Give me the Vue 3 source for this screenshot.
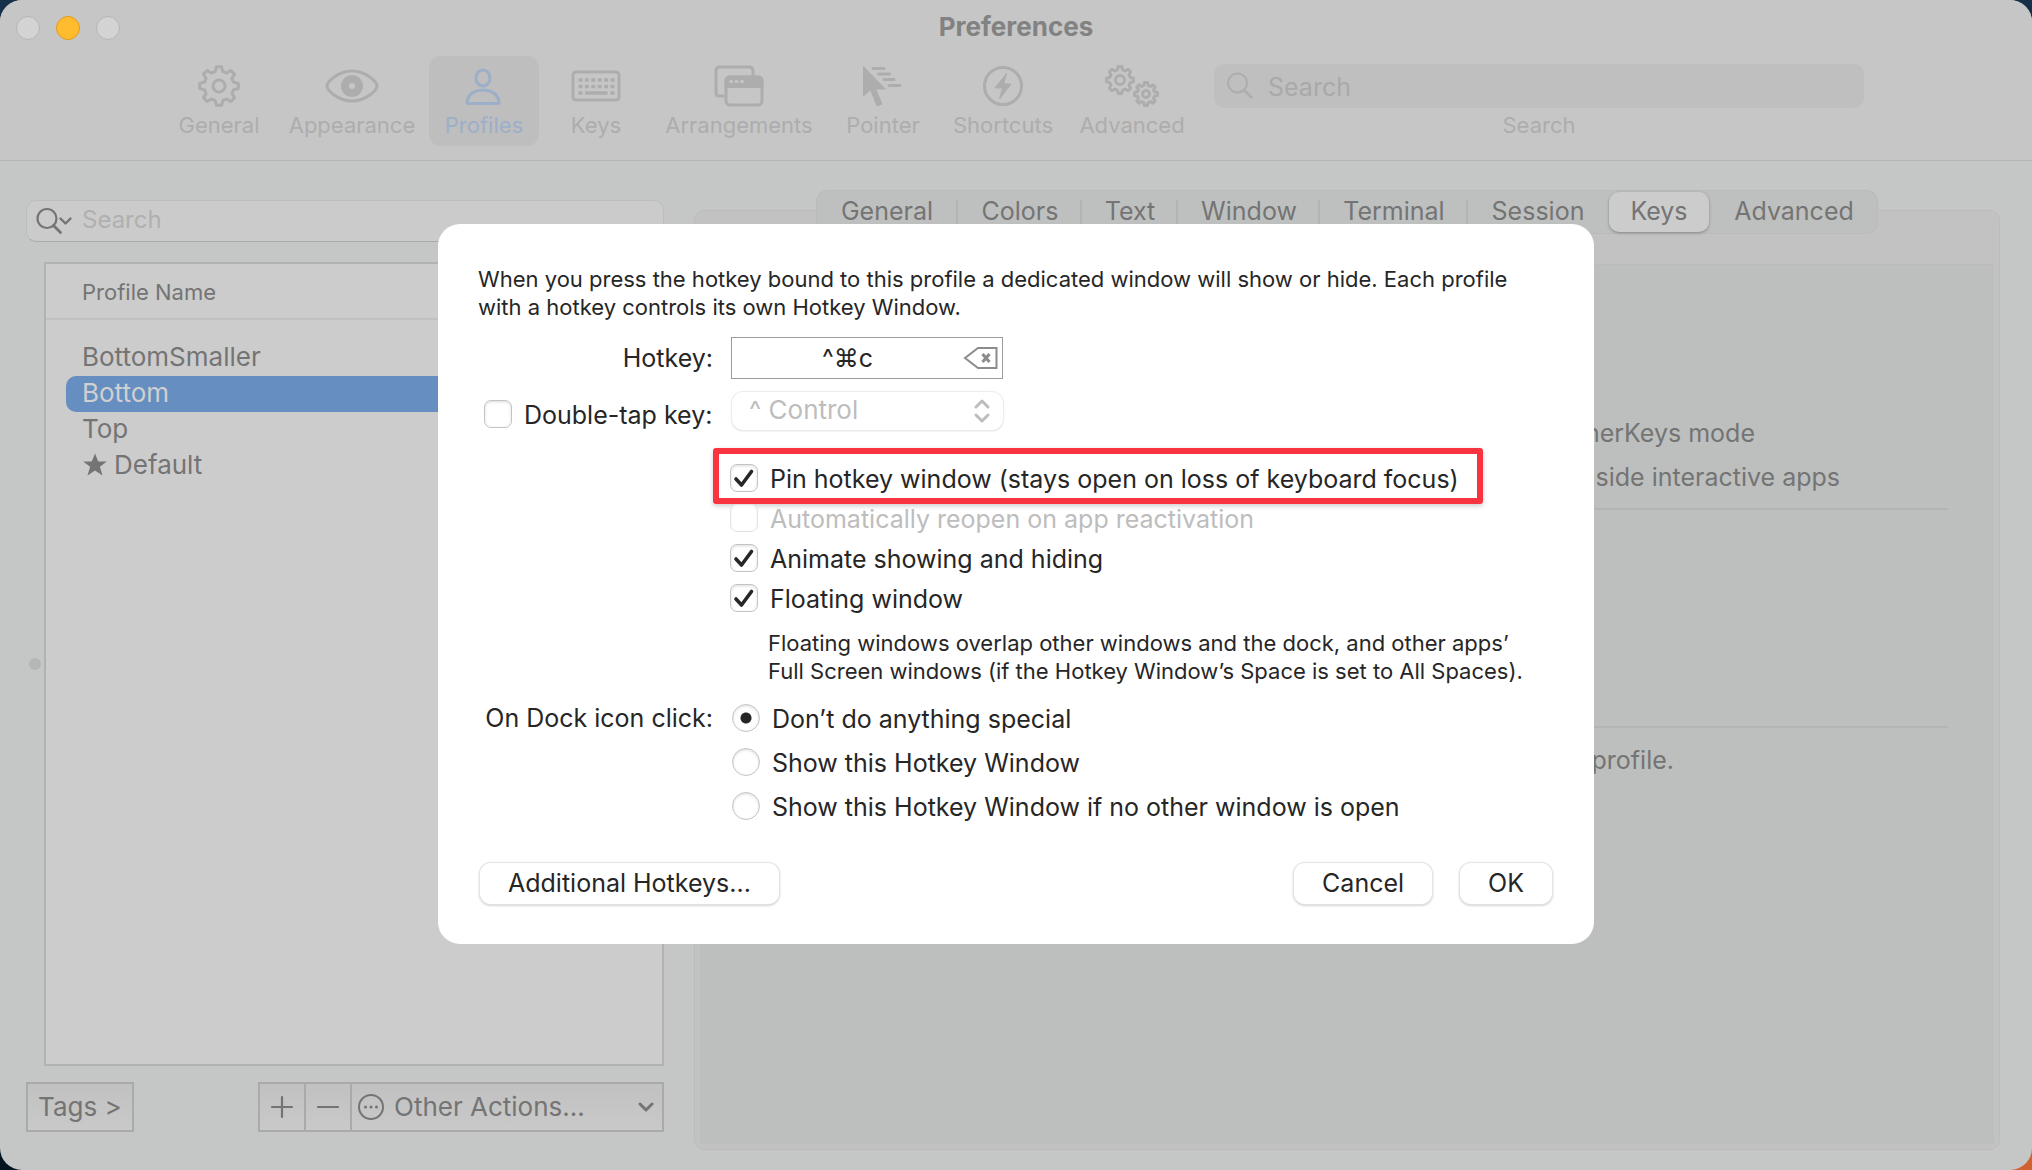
<script setup>
import { ref } from 'vue'

function gearPath(cx, cy, outer, inner, teeth) {
  const step = (Math.PI * 2) / teeth
  const points = []
  for (let i = 0; i < teeth; i++) {
    const a = i * step - Math.PI / 2
    const ring = [
      [inner, a - step * 0.32],
      [outer, a - step * 0.17],
      [outer, a + step * 0.17],
      [inner, a + step * 0.32],
    ]
    for (const [r, t] of ring) {
      points.push(`${(cx + r * Math.cos(t)).toFixed(2)} ${(cy + r * Math.sin(t)).toFixed(2)}`)
    }
  }
  return `M${points.join('L')}Z`
}

const bigGear = gearPath(24, 24, 19.5, 15, 8)
const leftGear = gearPath(16, 18, 13.5, 10.5, 8)
const rightGear = gearPath(42, 32, 11.5, 8.8, 8)

const toolbar = ['General', 'Appearance', 'Profiles', 'Keys', 'Arrangements', 'Pointer', 'Shortcuts', 'Advanced']
const tabs = ['General', 'Colors', 'Text', 'Window', 'Terminal', 'Session', 'Keys', 'Advanced']
const profiles = [
  { name: 'BottomSmaller' },
  { name: 'Bottom', selected: true },
  { name: 'Top' },
  { name: 'Default', starred: true },
]
const options = ref([
  { id: 'pin', label: 'Pin hotkey window (stays open on loss of keyboard focus)', on: true, marked: true },
  { id: 'reopen', label: 'Automatically reopen on app reactivation', on: false, disabled: true },
  { id: 'animate', label: 'Animate showing and hiding', on: true },
  { id: 'floating', label: 'Floating window', on: true },
])
const doubleTap = ref(false)
const dockClick = ref('none')
const dockChoices = [
  { id: 'none', label: 'Don’t do anything special' },
  { id: 'show', label: 'Show this Hotkey Window' },
  { id: 'showIf', label: 'Show this Hotkey Window if no other window is open' },
]
</script>

<template>
  <div class="desktop">
    <div class="window">
      <header class="titlebar">
        <div class="lights">
          <button class="light" aria-label="Close"></button>
          <button class="light amber" aria-label="Minimize"></button>
          <button class="light" aria-label="Zoom"></button>
        </div>
        <h1 class="title">Preferences</h1>
        <div class="toolbar">
          <nav class="tools">
            <button v-for="t in toolbar" :key="t" class="tool" :class="{ active: t === 'Profiles' }">
              <svg v-if="t === 'General'" width="48" height="48" viewBox="0 0 48 48" class="line">
                <path :d="bigGear" />
                <circle cx="24" cy="24" r="6" />
              </svg>
              <svg v-else-if="t === 'Appearance'" width="56" height="48" viewBox="0 0 56 48" class="line">
                <path d="M3 24C3 20 14 9 28 9S53 20 53 24 42 39 28 39 3 28 3 24Z" />
                <circle cx="28" cy="24" r="7" stroke-width="8" />
              </svg>
              <svg v-else-if="t === 'Profiles'" width="48" height="48" viewBox="0 0 48 48" class="line">
                <ellipse cx="23" cy="16" rx="7" ry="8" />
                <path d="M8 41.500C6.600 41.500 7.200 39 7.500 37.500 9 31.500 15.500 28 23 28s14 3.500 15.500 9.500c.3 1.500.9 4-.5 4Z" />
              </svg>
              <svg v-else-if="t === 'Keys'" width="52" height="48" viewBox="0 0 52 48" class="line">
                <rect x="3" y="10" width="46" height="28" rx="3" />
                <path d="M8.500 18h36M8.500 24.500h36" stroke-dasharray="4 2.400" stroke-width="3.500" stroke-linecap="butt" />
                <path d="M8.500 31h4M15 31h22.500M40.500 31h4" stroke-width="3.500" stroke-linecap="butt" />
              </svg>
              <svg v-else-if="t === 'Arrangements'" width="52" height="48" viewBox="0 0 52 48" class="line">
                <path d="M10 34H6q-3 0-3-3V9q0-4 4-4h29q4 0 4 4v5" />
                <rect x="13" y="15" width="36" height="28" rx="4" />
                <path d="M13 24.500V19q0-4 4-4h28q4 0 4 4v5.500Z" class="solid" />
                <path d="M17.500 19.500h1M23 19.500h1M28.500 19.500h1" stroke="#c6c6c6" stroke-width="3" />
              </svg>
              <svg v-else-if="t === 'Pointer'" width="48" height="48" viewBox="0 0 48 48" class="line">
                <path d="M4.500 5v29l7-6.500 6.500 16.500 5-2-6.500-15H26Z" class="solid" stroke-width="1" />
                <path d="M14 6.500h11M19.500 12h11M25 17.500h10M30 23.500h11" />
              </svg>
              <svg v-else-if="t === 'Shortcuts'" width="48" height="48" viewBox="0 0 48 48" class="line">
                <circle cx="24" cy="24" r="18.500" />
                <path d="M27.500 11.500 16 26h7.500L20.500 37 32 22h-7Z" class="solid" stroke-width="1" />
              </svg>
              <svg v-else width="56" height="48" viewBox="0 0 56 48" class="line">
                <path :d="leftGear" />
                <circle cx="16" cy="18" r="4.500" />
                <path :d="rightGear" />
                <circle cx="42" cy="32" r="3.500" />
              </svg>
              <span>{{ t }}</span>
            </button>
          </nav>
          <label class="tool-search">
            <span class="tool-field">
              <svg width="28" height="28" viewBox="0 0 28 28" class="line">
                <circle cx="11.500" cy="11" r="9.500" stroke-width="2" />
                <path d="m18 18 7.500 7.500" stroke-width="2.500" />
              </svg>
              <input type="search" placeholder="Search" />
            </span>
            <span class="tool-caption">Search</span>
          </label>
        </div>
      </header>

      <main class="content">
        <section class="sidebar">
          <label class="filter">
            <svg width="36" height="28" viewBox="0 0 36 28" class="line">
              <circle cx="11" cy="11.500" r="9.500" stroke-width="2.200" />
              <path d="m17.500 18.500 7 7" stroke-width="2.800" />
              <path d="m24.500 11.500 5 5 5-5" stroke-width="2.400" />
            </svg>
            <input type="search" placeholder="Search" aria-label="Filter profiles" />
          </label>
          <div class="list">
            <span class="handle"></span>
            <table>
              <thead>
                <tr><th scope="col">Profile Name</th></tr>
              </thead>
              <tbody>
                <tr v-for="p in profiles" :key="p.name">
                  <td>
                    <div class="profile" :class="{ selected: p.selected }">
                      <svg v-if="p.starred" width="26" height="24" viewBox="0 0 26 24">
                        <path fill="currentColor" d="M13 .5l3.200 8h8.600l-6.900 5.300 2.600 8.700L13 17.400 5.500 22.500l2.600-8.700L1.200 8.500h8.600Z" />
                      </svg>
                      <span>{{ p.name }}</span>
                    </div>
                  </td>
                </tr>
              </tbody>
            </table>
          </div>
          <div class="actions">
            <button class="square">Tags &gt;</button>
            <div class="group">
              <button class="square narrow" aria-label="Add profile">
                <svg width="24" height="24" viewBox="0 0 24 24" class="line"><path d="M12 2v20M2 12h20" stroke-width="2.200" /></svg>
              </button>
              <button class="square narrow" aria-label="Remove profile">
                <svg width="24" height="24" viewBox="0 0 24 24" class="line"><path d="M2 12h20" stroke-width="2.200" /></svg>
              </button>
              <button class="square wide">
                <svg width="28" height="28" viewBox="0 0 28 28" class="line">
                  <circle cx="14" cy="14" r="12" stroke-width="2" />
                  <path d="M8.500 14h.01M14 14h.01M19.500 14h.01" stroke-width="3" />
                </svg>
                <span>Other Actions...</span>
                <svg width="16" height="16" viewBox="0 0 16 16" class="line chevron"><path d="m2 5 6 6 6-6" /></svg>
              </button>
            </div>
          </div>
        </section>

        <section class="detail">
          <div class="tabs" role="tablist">
            <button
              v-for="t in tabs"
              :key="t"
              role="tab"
              class="tab"
              :class="{ current: t === 'Keys' }"
              :aria-selected="t === 'Keys'"
            >{{ t }}</button>
          </div>
          <div class="panel">
            <div class="pane">
              <p class="note mode">modifyOtherKeys mode</p>
              <p class="note apps">inside interactive apps</p>
              <hr />
              <hr class="far" />
              <p class="note owner">profile.</p>
            </div>
          </div>
        </section>
      </main>

      <form class="sheet" role="dialog" aria-label="Hotkey window" @submit.prevent>
        <p class="small">
          When you press the hotkey bound to this profile a dedicated window will show or hide. Each profile<br />
          with a hotkey controls its own Hotkey Window.
        </p>
        <div class="row hotkey-row">
          <label class="lead" for="hotkey">Hotkey:</label>
          <div class="hotkey">
            <input id="hotkey" type="text" value="^⌘c" readonly />
            <button type="button" aria-label="Clear hotkey">
              <svg width="36" height="24" viewBox="0 0 36 24" class="line">
                <path d="M2 12 15 2h18.500v20H15Z" stroke-width="2" stroke-linejoin="miter" />
                <path d="m19.500 8 7 8m0-8-7 8" stroke-width="3" stroke-linecap="butt" />
              </svg>
            </button>
          </div>
        </div>
        <div class="row double-row">
          <label class="option double">
            <span class="box">
              <input v-model="doubleTap" type="checkbox" />
            </span>
            <span>Double-tap key:</span>
          </label>
          <div class="picker">
            <select disabled aria-label="Double-tap modifier">
              <option>^ Control</option>
            </select>
            <svg width="16" height="24" viewBox="0 0 16 24" class="line">
              <path d="m2 8 6-6 6 6M2 16l6 6 6-6" />
            </svg>
          </div>
        </div>
        <div class="checks">
          <label v-for="o in options" :key="o.id" class="option" :class="{ off: o.disabled }">
            <span class="box">
              <input v-model="o.on" type="checkbox" :disabled="o.disabled" />
              <svg v-if="o.on" width="28" height="28" viewBox="0 0 28 28" class="line">
                <path d="m6 15 5.500 6L21.500 7.500" stroke-width="3.600" />
              </svg>
            </span>
            <span>{{ o.label }}</span>
            <span v-if="o.marked" class="marker"></span>
          </label>
        </div>
        <p class="small hint">
          Floating windows overlap other windows and the dock, and other apps’<br />
          Full Screen windows (if the Hotkey Window’s Space is set to All Spaces).
        </p>
        <div class="row dock" role="radiogroup" aria-labelledby="dock-label">
          <span id="dock-label" class="lead">On Dock icon click:</span>
          <div>
            <label v-for="c in dockChoices" :key="c.id" class="option radio">
              <input v-model="dockClick" type="radio" name="dock" :value="c.id" />
              <span>{{ c.label }}</span>
            </label>
          </div>
        </div>
        <footer class="buttons">
          <button type="button" class="push">Additional Hotkeys...</button>
          <button type="button" class="push end">Cancel</button>
          <button type="submit" class="push">OK</button>
        </footer>
      </form>
    </div>
  </div>
</template>

<style>
body {
  background: #1c2f45;
}
</style>

<style scoped>
* {
  box-sizing: border-box;
}
.desktop {
  min-height: 100vh;
  display: flex;
  background: linear-gradient(to bottom, transparent 50%, #001520 50%) left / 50% 100% no-repeat,
    linear-gradient(to bottom, #17304a 50%, #cf6230 50%);
  font-family: Inter, 'Liberation Sans', sans-serif;
  font-size: 25px;
  line-height: 32px;
  color: #747474;
}
button,
input,
select {
  font: inherit;
  color: inherit;
  margin: 0;
  padding: 0;
  border: 0;
  background: none;
}
input {
  min-width: 0;
  outline: 0;
}
p,
h1 {
  margin: 0;
}
.line {
  flex: none;
  fill: none;
  stroke: currentColor;
  stroke-width: 3;
  stroke-linecap: round;
  stroke-linejoin: round;
}
.solid {
  fill: currentColor;
}
.window {
  position: relative;
  flex: 1;
  display: flex;
  flex-direction: column;
  border-radius: 22px;
  overflow: hidden;
  background: #c5c7c6;
}
.titlebar {
  position: relative;
  height: 161px;
  background: #c6c6c6;
  border-bottom: 1px solid #b4b6b5;
}
.lights {
  position: absolute;
  left: 16px;
  top: 16px;
  display: flex;
  gap: 16px;
}
.light {
  width: 24px;
  height: 24px;
  border-radius: 50%;
  background: #d3d3d3;
  border: 1px solid #b4b4b4;
}
.amber {
  background: #febc2e;
  border-color: #e09c1a;
}
.title {
  padding-top: 11px;
  text-align: center;
  font-size: 26px;
  line-height: 32px;
  font-weight: 700;
  color: #828282;
}
.toolbar {
  display: flex;
  gap: 15px;
  margin-top: 13px;
  padding: 0 168px 0 163px;
  font-size: 22px;
  line-height: 28px;
  color: #adadad;
}
.tools {
  display: grid;
  grid-template-columns: 112px 154px 110px 114px 172px 116px 124px 134px;
}
.tool {
  display: flex;
  flex-direction: column;
  align-items: center;
  height: 90px;
  padding-top: 6px;
  border-radius: 12px;
}
.tool span {
  line-height: 30px;
}
.active {
  background: #bebebe;
  color: #9cafc8;
}
.tool-search {
  flex: 1;
  padding-top: 8px;
}
.tool-field {
  display: flex;
  align-items: center;
  gap: 14px;
  height: 44px;
  padding-left: 12px;
  border-radius: 10px;
  background: #bfbfbf;
  font-size: 25px;
}
.tool-field input,
.filter input {
  flex: 1;
  height: 32px;
}
.tool-field input {
  padding-top: 2px;
}
.tool-search input::placeholder {
  color: #a9a9a9;
}
.tool-caption {
  display: block;
  margin-top: 2px;
  line-height: 30px;
  text-align: center;
}
.content {
  flex: 1;
  display: grid;
  grid-template-columns: minmax(0, 638px) minmax(0, 1fr);
  gap: 30px;
  padding: 0 32px 0 26px;
}
.sidebar {
  display: flex;
  flex-direction: column;
  padding: 39px 0 38px;
}
.filter {
  display: flex;
  align-items: center;
  gap: 10px;
  height: 42px;
  padding-left: 9px;
  border-radius: 10px;
  background: #cbcbcb;
  border: 1px solid #bcbebd;
  border-bottom-color: #aaacab;
  font-size: 24px;
}
.filter input {
  padding-bottom: 2px;
}
.filter input::placeholder {
  color: #b0b0b0;
}
.list {
  position: relative;
  flex: 1;
  margin: 20px 0 16px 18px;
  border: 2px solid #b1b2b1;
  background: #cccccc;
}
.handle {
  position: absolute;
  left: -17px;
  top: 50%;
  width: 12px;
  height: 12px;
  margin-top: -6px;
  border-radius: 50%;
  background: #b5b7b6;
}
table {
  width: 100%;
  border-spacing: 0;
}
th {
  height: 56px;
  padding: 2px 36px 0;
  border-bottom: 2px solid #c1c1c1;
  font-size: 22px;
  font-weight: 400;
  text-align: left;
}
td {
  padding: 0 20px;
}
tbody::before {
  content: '';
  display: block;
  height: 20px;
}
.profile {
  display: flex;
  align-items: center;
  gap: 6px;
  height: 36px;
  padding: 0 16px 2px;
  border-radius: 10px;
  font-size: 26px;
}
.selected {
  background: #668ec1;
  color: #d0d0d0;
}
.actions {
  display: flex;
  justify-content: space-between;
  font-size: 26px;
}
.square {
  height: 50px;
  padding: 0 10px;
  border: 2px solid #a9aaa9;
  background: linear-gradient(#c1c1c1, #c9c9c9);
}
.group {
  display: flex;
}
.group .square + .square {
  border-left: 0;
}
.narrow {
  display: flex;
  align-items: center;
}
.wide {
  display: flex;
  align-items: center;
  gap: 9px;
  width: 312px;
  padding: 0 8px 0 5px;
}
.chevron {
  margin-left: auto;
}
.detail {
  display: flex;
  flex-direction: column;
  padding: 29px 0 20px;
}
.tabs {
  z-index: 1;
  display: grid;
  grid-template-columns: 142px 124px 96px 142px 148px 140px 102px 168px;
  align-self: center;
  height: 44px;
  border-radius: 12px;
  background: #bec0bf;
  box-shadow: inset 0 0 0 1px #b9bbba;
}
.tab {
  position: relative;
  padding-bottom: 2px;
}
.tab:nth-child(-n + 5)::after {
  content: '';
  position: absolute;
  right: 0;
  top: 10px;
  width: 2px;
  height: 24px;
  background: #b3b5b4;
}
.current {
  margin: 2px 1px;
  border-radius: 10px;
  background: #cccccc;
  box-shadow: 0 1px 3px rgba(0, 0, 0, 0.3);
}
.panel {
  flex: 1;
  display: flex;
  margin-top: -24px;
  padding: 53px 5px 5px;
  border: 1px solid #bcbcbc;
  border-radius: 10px;
  background: #c2c2c2;
}
.pane {
  flex: 1;
  padding-top: 152px;
  background: #bdbfbe;
  border-top: 1px solid #babbba;
}
.note {
  text-align: right;
}
.mode {
  padding-right: 239px;
}
.apps {
  margin-top: 12px;
  padding-right: 154px;
}
.owner {
  margin-top: 16px;
  padding-right: 320px;
}
hr {
  height: 2px;
  margin: 15px 46px 0;
  border: 0;
  background: #b3b5b4;
}
.far {
  margin-top: 216px;
}
.sheet {
  position: absolute;
  z-index: 2;
  top: 224px;
  left: 50%;
  width: 1156px;
  max-width: 100%;
  transform: translateX(-50%);
  padding: 41px 40px 40px;
  border-radius: 22px;
  background: #ffffff;
  color: #262626;
}
.small {
  font-size: 22px;
  line-height: 28px;
  white-space: nowrap;
}
.row {
  display: flex;
}
.lead {
  width: 235px;
  text-align: right;
  white-space: nowrap;
}
.hotkey-row {
  align-items: center;
  gap: 18px;
  margin-top: 16px;
}
.hotkey {
  display: flex;
  align-items: center;
  width: 272px;
  height: 42px;
  padding-right: 3px;
  border: 1px solid #9c9c9c;
}
.hotkey input {
  flex: 1;
  text-align: center;
}
.hotkey button {
  display: flex;
  color: #8c8c8c;
}
.double-row {
  height: 44px;
  margin-top: 13px;
}
.double {
  width: 254px;
  padding-left: 6px;
}
.picker {
  display: grid;
  align-items: center;
  width: 271px;
  height: 38px;
  border-radius: 11px;
  box-shadow: 0 0 1px 1px #ececec, 0 1px 2px rgba(0, 0, 0, 0.15);
  color: #bdbdbd;
}
.picker > * {
  grid-area: 1 / 1;
}
.picker select {
  appearance: none;
  height: 38px;
  padding: 0 18px 2px 17px;
  font-size: 26px;
  color: #bdbdbd;
  opacity: 1;
}
.picker svg {
  justify-self: end;
  margin-right: 13px;
  pointer-events: none;
}
.checks {
  margin: 22px 0 0 252px;
}
.option {
  position: relative;
  display: flex;
  align-items: center;
  gap: 12px;
  height: 40px;
  white-space: nowrap;
}
.option > span:nth-child(2) {
  padding-top: 2px;
}
.checks .option {
  width: fit-content;
}
.double-row .option {
  height: 44px;
}
.off {
  color: #bdbdbd;
}
.box {
  display: grid;
}
.box > * {
  grid-area: 1 / 1;
}
.option input {
  appearance: none;
  width: 28px;
  height: 28px;
  border: 1px solid #c4c4c4;
  border-radius: 7px;
  background: #ffffff;
  box-shadow: inset 0 1px 3px rgba(0, 0, 0, 0.14);
}
.off input {
  border-color: #e2e2e2;
  box-shadow: inset 0 1px 3px rgba(0, 0, 0, 0.06);
}
.option svg {
  z-index: 1;
}
.marker {
  position: absolute;
  inset: -10px -24px -6px -17px;
  border: 6px solid #fa3341;
  border-radius: 3px;
  box-shadow: 0 2px 5px rgba(0, 0, 0, 0.2);
  pointer-events: none;
}
.hint {
  margin: 11px 0 0 290px;
}
.dock {
  gap: 19px;
  margin-top: 11px;
}
.dock .lead {
  line-height: 44px;
}
.radio {
  height: 44px;
}
.radio input {
  border-radius: 50%;
}
.radio input:checked {
  background: radial-gradient(circle, #262626 5px, #ffffff 6px);
}
.buttons {
  display: flex;
  gap: 28px;
  margin-top: 35px;
  padding: 0 2px;
}
.push {
  height: 41px;
  padding: 0 28px 2px;
  border-radius: 11px;
  box-shadow: 0 0 1px 1px #e4e4e4, 0 1px 3px rgba(0, 0, 0, 0.35);
  background: #ffffff;
}
.end {
  margin-left: auto;
}
</style>
